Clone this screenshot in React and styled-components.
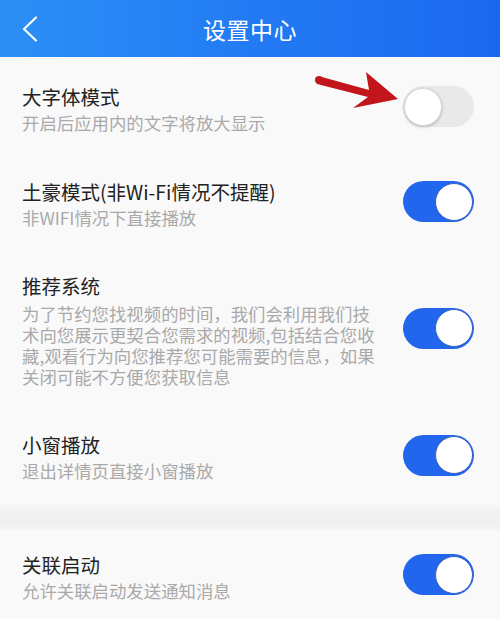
import React from 'react'
import styled, { createGlobalStyle } from 'styled-components'

const GlobalStyle = createGlobalStyle`
html, body {
  margin: 0;
  padding: 0;
  background: #f9f9f9;
}
* { box-sizing: border-box; }
`

const Page = styled.div`
position: relative;
min-height: 100vh;
background: #f9f9f9;
font-family: "Noto Sans CJK SC", "Noto Sans", sans-serif;
overflow: hidden;
`

const Header = styled.header`
height: 57px;
display: grid;
grid-template-columns: 80px 1fr 80px;
align-items: center;
background: linear-gradient(90deg, #2b90f6 0%, #2279f3 55%, #1b68f0 100%);
color: #fff;
`

const BackButton = styled.button`
display: flex;
align-items: center;
padding: 0 0 0 21px;
height: 100%;
border: none;
background: none;
cursor: pointer;
`

const Title = styled.h1`
margin: 0;
text-align: center;
font-size: 23px;
font-weight: 400;
letter-spacing: 0.5px;
`

const List = styled.main`
padding-top: 5px;
`

const Row = styled.div`
display: flex;
align-items: center;
justify-content: space-between;
padding: 23px 26px 23px 22px;
`

const TextCol = styled.div`
display: flex;
flex-direction: column;
gap: 4px;
max-width: 362px;
`

const RowTitle = styled.div`
font-size: 19.5px;
line-height: 24px;
color: #222;
`

const RowDesc = styled.div`
font-size: 17.4px;
line-height: 20.7px;
color: #a9a9a9;
margin-top: ${p => (p.$long ? '2px' : '0')};
`

const Divider = styled.div`
height: 25px;
background: linear-gradient(180deg, #f4f4f4 0%, #efefef 50%, #f3f3f3 100%);
`

const Track = styled.div`
flex: none;
display: flex;
align-items: center;
justify-content: ${p => (p.$on ? 'flex-end' : 'flex-start')};
width: 71px;
height: 41px;
margin-bottom: 5px;
padding: 0 1px;
border-radius: 21px;
background: ${p => (p.$on ? '#2166ec' : '#e9e9e9')};
`

const Knob = styled.div`
width: 38px;
height: 38px;
border-radius: 50%;
background: #fff;
border: 1px solid ${p => (p.$on ? '#3c5fc4' : '#dcdcdc')};
box-shadow: ${p => (p.$on ? 'none' : '0 1px 3px rgba(0,0,0,0.25)')};
`

// annotation arrow drawn over the first row
const Arrow = styled.svg`
position: absolute;
left: 310px;
top: 66px;
width: 92px;
height: 46px;
`

const Toggle = ({ on }) => (
  <Track $on={on}>
    <Knob $on={on} />
  </Track>
)

const settings = [
  [
    { title: '大字体模式', desc: '开启后应用内的文字将放大显示', on: false },
    { title: '土豪模式(非Wi-Fi情况不提醒)', desc: '非WIFI情况下直接播放', on: true },
    {
      title: '推荐系统',
      desc: '为了节约您找视频的时间，我们会利用我们技术向您展示更契合您需求的视频,包括结合您收藏,观看行为向您推荐您可能需要的信息，如果关闭可能不方便您获取信息',
      on: true,
      long: true,
    },
    { title: '小窗播放', desc: '退出详情页直接小窗播放', on: true },
  ],
  [
    { title: '关联启动', desc: '允许关联启动发送通知消息', on: true },
  ],
]

const App = () => {
  return (
    <Page>
      <GlobalStyle />
      <Header>
        <BackButton aria-label="返回">
          <svg width="18" height="26" viewBox="0 0 18 26" fill="none">
            <path d="M15 1.5 L3 13 L15 24.5" stroke="#fff" strokeWidth="2.2" strokeLinecap="round" strokeLinejoin="round" />
          </svg>
        </BackButton>
        <Title>设置中心</Title>
        <span />
      </Header>
      <List>
        {settings.map((group, gi) => (
          <React.Fragment key={gi}>
            {gi > 0 && <Divider />}
            {group.map(item => (
              <Row key={item.title}>
                <TextCol>
                  <RowTitle>{item.title}</RowTitle>
                  <RowDesc $long={item.long}>{item.desc}</RowDesc>
                </TextCol>
                <Toggle on={item.on} />
              </Row>
            ))}
          </React.Fragment>
        ))}
      </List>
      <Arrow viewBox="0 0 92 46">
        <polygon points="10,10.5 59,24 56,6 88,33 43,42 58,31 7,18" fill="#c2161c" />
        <circle cx="9" cy="14" r="4" fill="#c2161c" />
      </Arrow>
    </Page>
  )
}

export default App
